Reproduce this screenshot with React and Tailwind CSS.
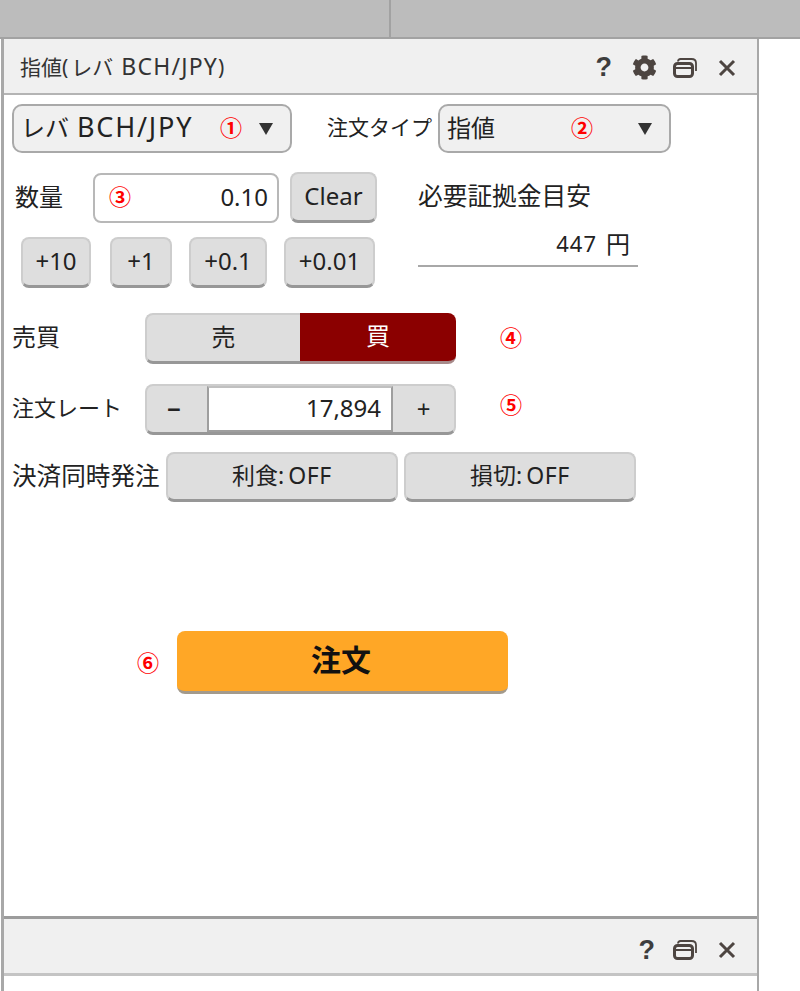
import React from 'react';
import { FaCog } from 'react-icons/fa';

const JP = "font-['Noto_Sans','Noto_Sans_CJK_JP',sans-serif]";

function Mark({ children, className = '' }) {
  return <span className={`text-[22px] leading-none font-bold text-[#ff0000] ${className}`}>{children}</span>;
}

function Arrow() {
  return (
    <svg width="14" height="12" viewBox="0 0 14 12" className="shrink-0">
      <path d="M0 0h14L7 12z" fill="#333" />
    </svg>
  );
}

function CardsIcon() {
  return (
    <svg width="24" height="20" viewBox="0 0 24 20" fill="none" stroke="#4d4541">
      <path d="M5 3.5C5 2 6 1 7.5 1h11C21 1 23 2.5 23 5v8" strokeWidth="1.8" />
      <rect x="1.5" y="5.5" width="18" height="13" rx="3" strokeWidth="3" />
      <path d="M2 10h17" strokeWidth="2" />
    </svg>
  );
}

function CloseIcon() {
  return (
    <svg width="18" height="18" viewBox="0 0 18 18" stroke="#4d4541" strokeWidth="3">
      <path d="M2 2l14 14M16 2L2 16" />
    </svg>
  );
}

function Help() {
  return <span className="text-[27px] leading-none font-bold text-[#3d3d3d] font-['Liberation_Sans',sans-serif]">?</span>;
}

function GrayButton({ className = '', children }) {
  return (
    <button className={`flex items-center justify-center rounded-lg border-2 border-[#cdcdcd] border-b-[3px] border-b-[#979797] bg-[#dedede] pb-[2px] text-[#222] ${className}`}>
      {children}
    </button>
  );
}

function Select({ className = '', children, mark, markClass }) {
  return (
    <div className={`relative flex h-[49px] items-center rounded-[10px] border-2 border-[#a9a9a9] bg-[#f0f0f0] pb-[2px] ${className}`}>
      {children}
      <Mark className={`absolute top-[10px] ${markClass}`}>{mark}</Mark>
    </div>
  );
}

export default function App() {
  return (
    <div className={`flex h-[991px] w-[800px] flex-col overflow-hidden bg-white text-[#222] ${JP}`}>
      {/* top tab strip */}
      <div className="flex h-[39px] shrink-0 border-b-2 border-[#a2a2a2] bg-[#bcbcbc]">
        <div className="w-[391px] border-r-2 border-[#a2a2a2]" />
      </div>

      <div className="ml-[1px] flex w-[758px] flex-1 flex-col border-l-[3px] border-r-2 border-[#a8a8a8]">
        {/* panel header */}
        <div className="flex h-[56px] shrink-0 items-center border-b-2 border-[#b4b4b4] bg-[#f0f0f0] pl-[16px] pr-[21px]">
          <span className="text-[21px] text-[#333]">
            指値(<span className="ml-[3px] text-[21px]">レバ</span>
            <span className="ml-[8px] text-[23px] tracking-[1.2px]">BCH/JPY</span>)
          </span>
          <div className="ml-auto flex items-center pt-[3px]">
            <Help />
            <FaCog className="ml-[20px] text-[25px] text-[#4d4541]" />
            <div className="ml-[16px]"><CardsIcon /></div>
            <div className="ml-[21px]"><CloseIcon /></div>
          </div>
        </div>

        {/* order form */}
        <div className="flex flex-1 flex-col pl-[8px] pt-[9px]">
          <div className="flex items-center">
            <Select className="w-[280px] pl-[7px]" mark="①" markClass="left-[206px]">
              <span className="text-[24px]">レバ</span>
              <span className="ml-[8px] text-[27px] tracking-[1.8px]">BCH/JPY</span>
              <span className="absolute left-[245px] top-[17px]"><Arrow /></span>
            </Select>
            <span className="ml-[35px] -mt-[2px] text-[21px]">注文タイプ</span>
            <Select className="ml-[6px] w-[233px] pl-[7px]" mark="②" markClass="left-[131px]">
              <span className="text-[24px]">指値</span>
              <span className="absolute left-[198px] top-[17px]"><Arrow /></span>
            </Select>
          </div>

          <div className="mt-[19px] flex">
            <div className="w-[406px]">
              <div className="flex items-center">
                <span className="ml-[3px] -mt-[2px] w-[78px] text-[24px]">数量</span>
                <div className="relative flex h-[50px] w-[186px] items-center justify-end rounded-lg border-2 border-[#b8b8b8] bg-white pb-[2px] pr-[9px] text-[24px]">
                  <Mark className="absolute left-[14px] top-[10px]">③</Mark>
                  0.10
                </div>
                <GrayButton className="ml-[11px] h-[51px] w-[87px] text-[24px]">Clear</GrayButton>
              </div>
              <div className="ml-[9px] mt-[14px] flex text-[24px]">
                <GrayButton className="h-[51px] w-[70px]">+10</GrayButton>
                <GrayButton className="ml-[19px] h-[51px] w-[62px]">+1</GrayButton>
                <GrayButton className="ml-[17px] h-[51px] w-[78px]">+0.1</GrayButton>
                <GrayButton className="ml-[17px] h-[51px] w-[91px]">+0.01</GrayButton>
              </div>
            </div>
            <div className="w-[220px] pt-[6px]">
              <div className="text-[24.7px] leading-[36px]">必要証拠金目安</div>
              <div className="mt-[20px] flex h-[33px] items-center justify-end border-b-2 border-[#a8a8a8] pb-[12px] pr-[8px]">
                <span className="text-[22px] tracking-[1px]">447</span>
                <span className="ml-[9px] text-[24px]">円</span>
              </div>
            </div>
          </div>

          <div className="mt-[25px] flex items-center">
            <span className="-mt-[4px] w-[133px] text-[24px]">売買</span>
            <div className="flex h-[51px] w-[311px] text-[24px]">
              <div className="flex w-[155px] items-center justify-center rounded-l-lg border-2 border-r-0 border-[#cdcdcd] border-b-[3px] border-b-[#979797] bg-[#dedede] pb-[3px]">売</div>
              <div className="flex flex-1 items-center justify-center rounded-r-lg border-b-[3px] border-b-[#a78a8a] bg-[#8b0000] pb-[3px] text-white">買</div>
            </div>
            <Mark className="ml-[44px] -mt-[4px]">④</Mark>
          </div>

          <div className="mt-[20px] flex items-center">
            <span className="-mt-[4px] w-[133px] text-[22px]">注文レート</span>
            <div className="flex h-[51px] w-[311px] overflow-hidden rounded-lg border-2 border-[#cdcdcd] border-b-[3px] border-b-[#979797] bg-[#dedede] text-[24px]">
              <div className="flex w-[60px] items-center justify-center pr-[6px] font-bold">−</div>
              <div className="flex w-[186px] items-center justify-end border-x-2 border-y-2 border-[#9e9e9e] border-t-[#c0c0c0] bg-white pb-[2px] pr-[10px] text-[24px]">17,894</div>
              <div className="flex flex-1 items-center justify-center">+</div>
            </div>
            <Mark className="ml-[44px] -mt-[12px]">⑤</Mark>
          </div>

          <div className="mt-[17px] flex items-center">
            <span className="-mt-[2px] w-[154px] whitespace-nowrap text-[24.6px]">決済同時発注</span>
            <GrayButton className="h-[50px] w-[232px] text-[23px]">利食:<span className="ml-[4px] tracking-[0.6px]">OFF</span></GrayButton>
            <GrayButton className="ml-[6px] h-[50px] w-[232px] text-[23px]">損切:<span className="ml-[4px] tracking-[0.6px]">OFF</span></GrayButton>
          </div>

          <div className="mt-[129px] flex items-center">
            <Mark className="ml-[125px] -mt-[2px]">⑥</Mark>
            <button className="ml-[18px] h-[63px] w-[331px] rounded-lg border-b-[3px] border-b-[#a39a8c] bg-[#ffa726] pb-[4px] pr-[3px] text-[30px] font-bold text-[#111]">注文</button>
          </div>
        </div>

        {/* next panel */}
        <div className="flex h-[60px] shrink-0 items-center justify-end border-y-[3px] border-t-[#9c9c9c] border-b-[#c4c4c4] bg-[#f0f0f0] pr-[21px] pt-[8px]">
          <Help />
          <div className="ml-[18px]"><CardsIcon /></div>
          <div className="ml-[21px]"><CloseIcon /></div>
        </div>
        <div className="h-[15px] shrink-0" />
      </div>
    </div>
  );
}
